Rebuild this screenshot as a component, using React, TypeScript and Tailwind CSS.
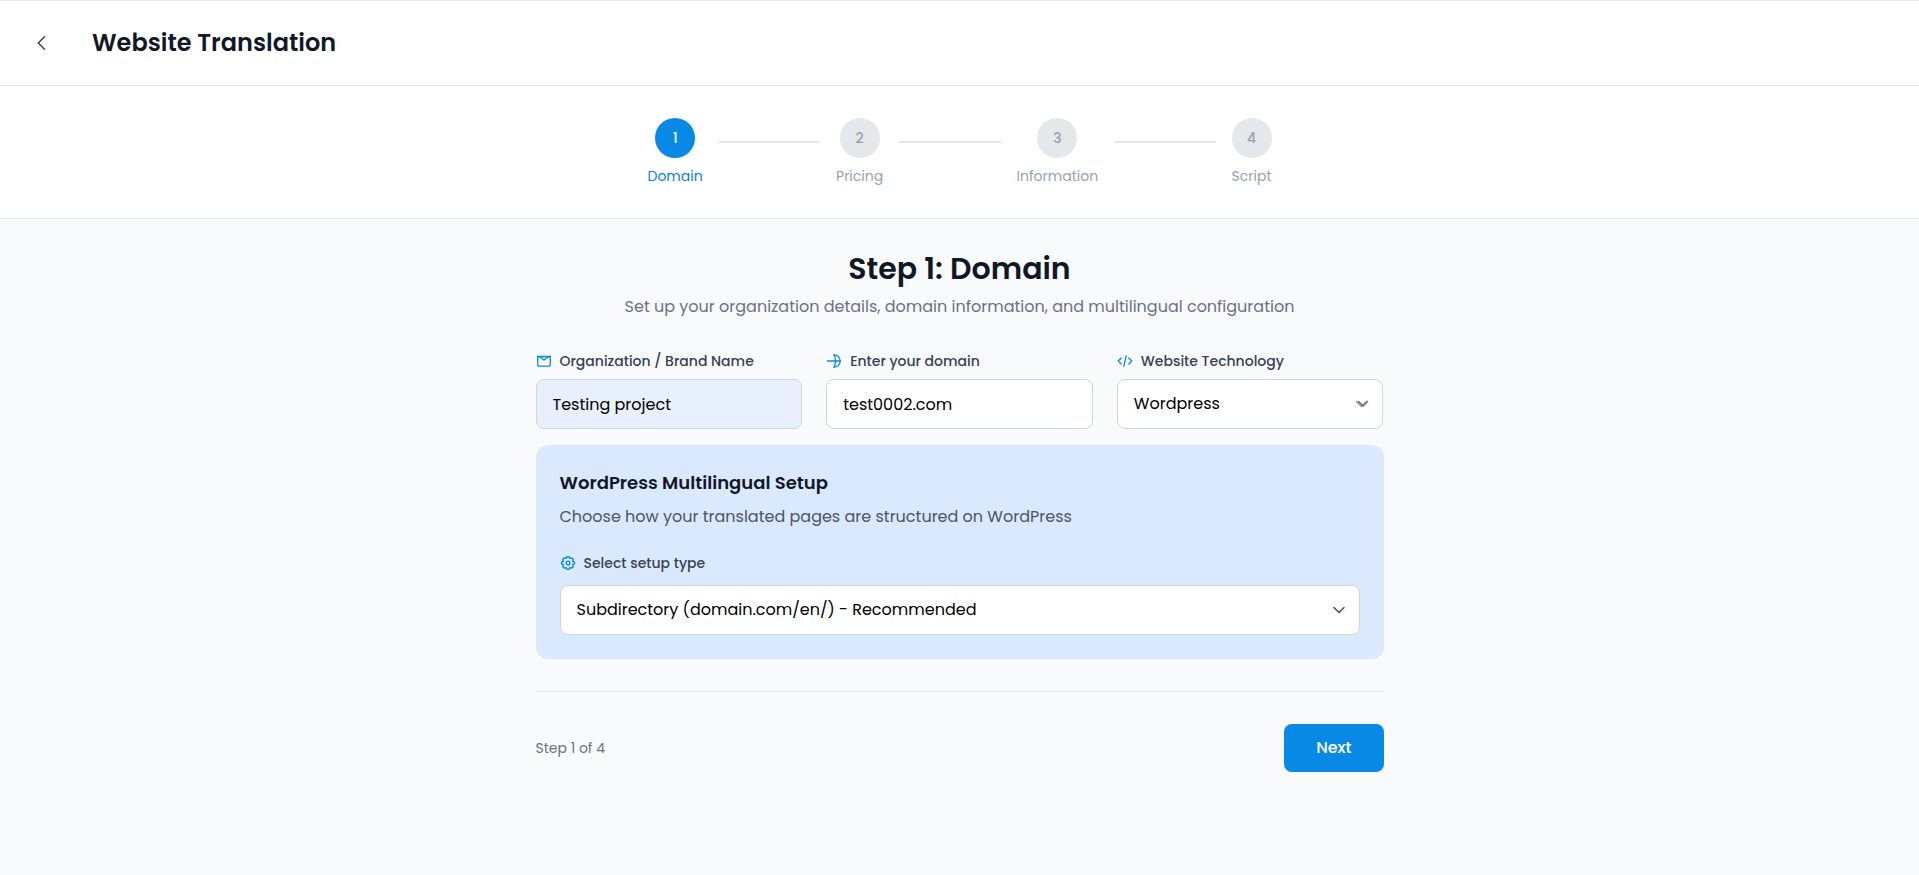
import React, { useState } from 'react';

const steps = ['Domain', 'Pricing', 'Information', 'Script'];

const labelClass = 'flex items-center gap-2 text-sm leading-5 font-medium text-gray-700';
const fieldClass =
  'block w-full h-[50px] px-4 rounded-lg border border-gray-300 text-base text-black outline-none focus:border-[#0889e6]';
const iconClass = 'w-4 h-4 text-[#0889e6]';

function MailIcon() {
  return (
    <svg className={iconClass} viewBox="0 0 16 16" fill="none" stroke="currentColor" strokeWidth="1.3" strokeLinecap="round" strokeLinejoin="round" aria-hidden="true">
      <path d="M1.700 3.500h12.600v8.300a1.400 1.400 0 0 1-1.400 1.400H3.100a1.400 1.400 0 0 1-1.400-1.400z" />
      <path d="M1.700 3.500l2.600.6L8 7.100l3.700-3 2.600-.6" />
    </svg>
  );
}

function GlobeIcon() {
  return (
    <svg className={iconClass} viewBox="0 0 16 16" fill="none" stroke="currentColor" strokeWidth="1.3" strokeLinecap="round" strokeLinejoin="round" aria-hidden="true">
      <path d="M8 1.800a6.200 6.200 0 0 1 0 12.400" />
      <path d="M8 1.800c1 1.600 1.500 3.900 1.500 6.200S9 12.600 8 14.200M1.500 8h12.700" />
    </svg>
  );
}

function CodeIcon() {
  return (
    <svg className={iconClass} viewBox="0 0 16 16" fill="none" stroke="currentColor" strokeWidth="1.3" strokeLinecap="round" strokeLinejoin="round" aria-hidden="true">
      <path d="M4.200 5L1.200 8l3 3M11.800 5l3 3-3 3M9.200 2.700L6.800 13.300" />
    </svg>
  );
}

function GearIcon() {
  return (
    <svg className={iconClass} viewBox="0 0 16 16" fill="none" stroke="currentColor" strokeWidth="1.4" strokeLinejoin="round" aria-hidden="true">
      <path d="M7.200 1.600H8.800L9.900 3.300L11.900 2.900L13.100 4.100L12.700 6.100L14.400 7.200V8.800L12.700 9.900L13.100 11.900L11.900 13.100L9.900 12.700L8.800 14.400H7.200L6.100 12.700L4.100 13.100L2.900 11.900L3.300 9.900L1.600 8.800V7.200L3.300 6.100L2.900 4.100L4.100 2.900L6.100 3.300Z" />
      <circle cx="8" cy="8" r="1.900" />
    </svg>
  );
}

function Chevron({ className, doubled }: { className: string; doubled?: boolean }) {
  return (
    <svg className={`pointer-events-none absolute right-[13px] top-1/2 -translate-y-1/2 w-4 h-4 ${className}`} viewBox="0 0 16 16" fill="none" stroke="currentColor" strokeWidth="1.6" strokeLinecap="round" strokeLinejoin="round" aria-hidden="true">
      <path d={doubled ? 'M4.500 5.500L9 10L13.500 5.500' : 'M3 5.500L8 10.500L13 5.500'} />
      {doubled && <path d="M2.500 5.500L7.500 10.500L12.500 5.500" opacity="0.7" />}
    </svg>
  );
}

export default function App() {
  const [organization, setOrganization] = useState('Testing project');
  const [domain, setDomain] = useState('test0002.com');
  const [technology, setTechnology] = useState('wordpress');
  const [setup, setSetup] = useState('subdirectory');

  return (
    <div className="min-h-screen bg-[#f9fafb] font-[Poppins,Inter,sans-serif]">
      <header className="bg-white border-y border-gray-200 px-6 py-6 flex items-center gap-8">
        <button type="button" aria-label="Back" className="w-9 h-9 flex items-center justify-center text-gray-700">
          <svg className="w-[18px] h-[18px]" viewBox="0 0 18 18" fill="none" stroke="currentColor" strokeWidth="1.5" strokeLinecap="round" strokeLinejoin="round" aria-hidden="true">
            <path d="M11.500 2.800L5.300 9l6.200 6.200" />
          </svg>
        </button>
        <h1 className="text-2xl leading-9 font-semibold text-gray-900">Website Translation</h1>
      </header>

      <nav className="bg-white border-b border-gray-200 py-8">
        <ol className="max-w-2xl mx-auto px-6 flex items-center">
          {steps.map((step, index) => (
            <React.Fragment key={step}>
              {index > 0 && <li aria-hidden="true" className="flex-1 h-0.5 mx-4 -mt-5 bg-gray-200" />}
              <li className="flex flex-col items-center">
                <span
                  className={`w-10 h-10 rounded-full flex items-center justify-center text-sm font-medium ${
                    index === 0 ? 'bg-[#0889e6] text-white' : 'bg-gray-200 text-gray-400'
                  }`}
                >
                  {index + 1}
                </span>
                <span className={`mt-2 text-sm leading-5 ${index === 0 ? 'text-[#0b7fd8]' : 'text-gray-400'}`}>{step}</span>
              </li>
            </React.Fragment>
          ))}
        </ol>
      </nav>

      <main className="max-w-4xl mx-auto px-6 py-8">
        <div className="text-center mb-8">
          <h2 className="text-3xl leading-9 font-semibold text-gray-900">Step 1: Domain</h2>
          <p className="mt-2 text-base leading-6 text-gray-500">
            Set up your organization details, domain information, and multilingual configuration
          </p>
        </div>

        <form onSubmit={(e) => e.preventDefault()}>
          <div className="grid grid-cols-1 md:grid-cols-3 gap-6">
            <div>
              <label htmlFor="organization" className={`${labelClass} mb-2`}>
                <MailIcon />
                Organization / Brand Name
              </label>
              <input
                id="organization"
                type="text"
                value={organization}
                onChange={(e) => setOrganization(e.target.value)}
                className={`${fieldClass} bg-[#e8f0fe]`}
              />
            </div>
            <div>
              <label htmlFor="domain" className={`${labelClass} mb-2`}>
                <GlobeIcon />
                Enter your domain
              </label>
              <input
                id="domain"
                type="text"
                value={domain}
                onChange={(e) => setDomain(e.target.value)}
                className={`${fieldClass} bg-white`}
              />
            </div>
            <div>
              <label htmlFor="technology" className={`${labelClass} mb-2`}>
                <CodeIcon />
                Website Technology
              </label>
              <div className="relative">
                <select
                  id="technology"
                  value={technology}
                  onChange={(e) => setTechnology(e.target.value)}
                  className={`${fieldClass} bg-white appearance-none`}
                >
                  <option value="wordpress">Wordpress</option>
                </select>
                <Chevron className="text-gray-500" doubled />
              </div>
            </div>
          </div>

          <section className="mt-4 p-6 rounded-xl bg-[#dbe9fe]">
            <h3 className="text-lg leading-7 font-semibold text-gray-900">WordPress Multilingual Setup</h3>
            <p className="mt-2 text-base leading-6 text-gray-600">Choose how your translated pages are structured on WordPress</p>
            <label htmlFor="setup" className={`${labelClass} mt-6 mb-3`}>
              <GearIcon />
              Select setup type
            </label>
            <div className="relative">
              <select
                id="setup"
                value={setup}
                onChange={(e) => setSetup(e.target.value)}
                className={`${fieldClass} bg-white appearance-none`}
              >
                <option value="subdirectory">Subdirectory (domain.com/en/) - Recommended</option>
              </select>
              <Chevron className="text-gray-600" />
            </div>
          </section>

          <div className="mt-8 pt-8 border-t border-gray-200 flex items-center justify-between">
            <span className="text-sm leading-5 text-gray-500">Step 1 of 4</span>
            <button type="submit" className="h-12 px-8 rounded-lg bg-[#0889e6] text-white text-base font-medium">
              Next
            </button>
          </div>
        </form>
      </main>
    </div>
  );
}
